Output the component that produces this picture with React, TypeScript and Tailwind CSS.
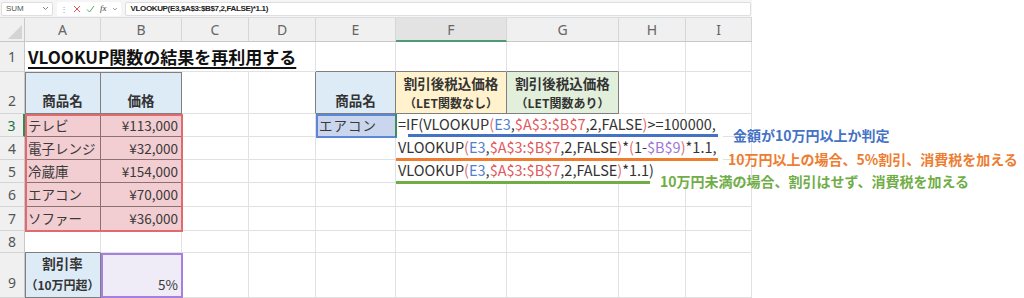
import React from 'react';

const GRIDCLS = 'border-r border-b border-[#e1e1e1]';

function C({ className = '', children }: { className?: string; children?: React.ReactNode }) {
  return <div className={`relative flex whitespace-nowrap ${GRIDCLS} ${className}`}>{children}</div>;
}

function RH({ n, active = false, className = '' }: { n: number; active?: boolean; className?: string }) {
  return (
    <div
      className={`flex justify-center border-b border-[#d4d4d4] bg-[#f0f0f0] font-['Noto_Sans',sans-serif] text-[14px] ${
        active ? 'border-r-2 border-r-[#2e8b57] text-[#217346]' : 'border-r border-r-[#c8c8c8] text-[#555]'
      } ${className}`}
    >
      {n}
    </div>
  );
}

function CH({ l, active = false }: { l: string; active?: boolean }) {
  return (
    <div
      className={`flex items-center justify-center border-r border-[#d6d6d6] font-['Noto_Sans',sans-serif] text-[14px] text-[#666] ${
        active ? 'border-b-2 border-b-[#4f9a74] bg-[#e3e3e3]' : 'border-b border-b-[#c8c8c8] bg-[#f0f0f0]'
      }`}
    >
      {l}
    </div>
  );
}

const R = ({ children }: { children: React.ReactNode }) => <span className="text-[#e0585b]">{children}</span>;
const B = ({ children }: { children: React.ReactNode }) => <span className="text-[#4f7fd0]">{children}</span>;
const P = ({ children }: { children: React.ReactNode }) => <span className="text-[#9d76d8]">{children}</span>;
const Q = ({ children }: { children: React.ReactNode }) => <span className="text-[#e06c72]">{children}</span>;

export default function App() {
  return (
    <div className="relative h-[298px] w-[1024px] overflow-hidden bg-white font-['Noto_Sans_CJK_JP','Noto_Sans',sans-serif] text-[#333]">
      {/* formula bar */}
      <div className="flex h-[18px] w-[752px] items-center gap-[4px] border-b border-[#d9dde3] bg-[#f5f5f5] px-[1px]">
        <div className="flex h-[14px] w-[52px] items-center justify-between rounded-[2px] border border-[#dedede] bg-white pl-[4px] pr-[3px] font-['Liberation_Sans',sans-serif] text-[8px] text-[#555]">
          <span>SUM</span>
          <svg width="7" height="5" viewBox="0 0 7 5">
            <path d="M1 1l2.5 2.5L6 1" fill="none" stroke="#777" strokeWidth="0.9" />
          </svg>
        </div>
        <div className="flex h-[14px] items-center gap-[5px] rounded-[2px] bg-white px-[3px]">
          <span className="text-[8px] leading-none text-[#999]">⋮</span>
          <svg width="8" height="8" viewBox="0 0 8 8">
            <path d="M1 1l6 6M7 1L1 7" stroke="#e05555" strokeWidth="1" />
          </svg>
          <svg width="9" height="8" viewBox="0 0 9 8">
            <path d="M1 4.5l2.5 2.5L8 1" fill="none" stroke="#4caf6a" strokeWidth="1" />
          </svg>
          <span className="font-['Liberation_Serif',serif] text-[9px] italic leading-none text-[#444]">fx</span>
          <svg width="6" height="4" viewBox="0 0 6 4">
            <path d="M1 1l2 2 2-2" fill="none" stroke="#888" strokeWidth="0.8" />
          </svg>
        </div>
        <div className="flex h-[14px] flex-1 items-center rounded-[2px] border border-[#dedede] bg-white pl-[5px] font-['Liberation_Sans',sans-serif] text-[8px] font-semibold tracking-[-0.35px] text-[#222]">
          VLOOKUP(E3,$A$3:$B$7,2,FALSE)*1.1)
        </div>
      </div>

      {/* grid */}
      <div className="grid w-[752px] grid-cols-[25px_76px_81px_67px_67px_80px_111px_112px_67px_66px] grid-rows-[24px_30px_42px_23px_23px_23px_24px_24px_22px_45px] text-[13.5px]">
        {/* header row */}
        <div className="relative border-r border-b border-[#c8c8c8] bg-[#f0f0f0]">
          <svg className="absolute bottom-[2px] right-[2px]" width="14" height="14" viewBox="0 0 14 14">
            <path d="M14 0V14H0Z" fill="#d4d4d4" />
          </svg>
        </div>
        <CH l="A" />
        <CH l="B" />
        <CH l="C" />
        <CH l="D" />
        <CH l="E" />
        <CH l="F" active />
        <CH l="G" />
        <CH l="H" />
        <CH l="I" />

        {/* row 1 */}
        <RH n={1} className="items-center" />
        <C className="col-span-4 items-center border-r-[#e1e1e1] pl-[3px]">
          <span className="whitespace-nowrap text-[17px] font-bold text-[#111] underline decoration-[1.5px] underline-offset-[3px]">
            VLOOKUP関数の結果を再利用する
          </span>
        </C>
        <C className="border-b-[#7f7f7f]" />
        <C className="border-b-[#7f7f7f]" />
        <C className="border-b-[#7f7f7f]" />
        <C />
        <C />

        {/* row 2 */}
        <RH n={2} className="items-end pb-[2px]" />
        <C className="items-end justify-center border-r-[#7f7f7f] border-b-[#7f7f7f] bg-[#ddebf7] pb-[3px] font-bold shadow-[inset_1px_1px_0_#7f7f7f]">
          商品名
        </C>
        <C className="items-end justify-center border-r-[#7f7f7f] border-b-[#7f7f7f] bg-[#ddebf7] pb-[3px] font-bold shadow-[inset_0_1px_0_#7f7f7f]">
          価格
        </C>
        <C />
        <C className="border-r-[#7f7f7f]" />
        <C className="items-end justify-center border-r-[#7f7f7f] border-b-[#7f7f7f] bg-[#ddebf7] pb-[3px] font-bold">
          商品名
        </C>
        <C className="flex-col items-center justify-center border-r-[#7f7f7f] border-b-[#7f7f7f] bg-[#fff2cc] font-bold leading-[20px]">
          <span>割引後税込価格</span>
          <span className="text-[12px]">（LET関数なし）</span>
        </C>
        <C className="flex-col items-center justify-center border-r-[#7f7f7f] border-b-[#7f7f7f] bg-[#e2efda] font-bold leading-[20px]">
          <span>割引後税込価格</span>
          <span className="text-[12px]">（LET関数あり）</span>
        </C>
        <C />
        <C />

        {/* rows 3-7 */}
        {[
          ['テレビ', '¥113,000'],
          ['電子レンジ', '¥32,000'],
          ['冷蔵庫', '¥154,000'],
          ['エアコン', '¥70,000'],
          ['ソファー', '¥36,000'],
        ].map(([name, price], i) => (
          <React.Fragment key={name}>
            <RH n={i + 3} active={i === 0} className="items-center" />
            <C className="items-center border-r-[#8a7272] border-b-[#8a7272] bg-[#f2cdd1] pl-[3px] text-[#3a3a3a]">
              {name}
            </C>
            <C className="items-center justify-end border-r-[#8a7272] border-b-[#8a7272] bg-[#f2cdd1] pr-[3px] text-[#3a3a3a]">
              {price}
            </C>
            <C />
            <C />
            {i === 0 ? (
              <C className="items-center bg-[#cad6ee] pl-[3px] tracking-[1px] text-[#3a3a3a]">エアコン</C>
            ) : (
              <C />
            )}
            <C />
            <C />
            <C />
            <C />
          </React.Fragment>
        ))}

        {/* row 8 */}
        <RH n={8} className="items-center" />
        <C className="border-b-[#7f7f7f]" />
        <C />
        <C />
        <C />
        <C />
        <C />
        <C />
        <C />
        <C />

        {/* row 9 */}
        <RH n={9} className="items-end pb-[4px]" />
        <C className="flex-col items-center justify-end border-r-[#7f7f7f] border-b-[#7f7f7f] bg-[#ddebf7] pb-[2px] font-bold leading-[21px] shadow-[inset_1px_0_0_#7f7f7f]">
          <span>割引率</span>
          <span className="text-[12px]">（10万円超）</span>
        </C>
        <C className="items-end justify-end bg-[#efebf7] pb-[3px] pr-[3px] text-[#3a3a3a]">5%</C>
        <C />
        <C />
        <C />
        <C />
        <C />
        <C />
        <C />
      </div>

      {/* reference highlights */}
      <div className="pointer-events-none absolute left-[25px] top-[114px] h-[118px] w-[158px] border-2 border-[#e06a6e]" />
      <div className="pointer-events-none absolute left-[316px] top-[114px] h-[24px] w-[81px] border-2 border-[#5b87d6]" />
      <div className="pointer-events-none absolute left-[101px] top-[253px] h-[45px] w-[82px] border-2 border-[#a680e0]" />

      {/* in-cell editor */}
      <div className="absolute left-[397px] top-[114px] h-[69px] w-[326px] bg-white pl-[1px] text-[14.5px] leading-[23px] text-[#333]">
        <div className="-mt-[2px]">
          <div className="whitespace-nowrap">
            =IF(VLOOKUP<Q>(</Q>
            <B>E3</B>,<R>$A$3:$B$7</R>,2,FALSE<Q>)</Q>&gt;=100000,
          </div>
          <div className="whitespace-nowrap">
            VLOOKUP<Q>(</Q>
            <B>E3</B>,<R>$A$3:$B$7</R>,2,FALSE<Q>)</Q>*<Q>(</Q>1-<P>$B$9</P>
            <Q>)</Q>*1.1,
          </div>
          <div className="whitespace-nowrap">
            VLOOKUP<Q>(</Q>
            <B>E3</B>,<R>$A$3:$B$7</R>,2,FALSE<Q>)</Q>*1.1)
          </div>
        </div>
      </div>
      <div className="absolute left-[395px] top-[114px] h-[23px] w-[2px] bg-[#3a8f5c]" />

      {/* underlines */}
      <div className="absolute left-[408px] top-[134px] h-[3px] w-[310px] bg-[#4472c4]" />
      <div className="absolute left-[396px] top-[158px] h-[3px] w-[322px] bg-[#ed7d31]" />
      <div className="absolute left-[396px] top-[181px] h-[3px] w-[254px] bg-[#70ad47]" />

      {/* annotations */}
      <div className="absolute left-[733px] top-[125px] whitespace-nowrap text-[14px] font-bold leading-[20px] text-[#4472c4]">
        金額が10万円以上か判定
      </div>
      <div className="absolute left-[728px] top-[149px] whitespace-nowrap text-[14px] font-bold leading-[20px] text-[#ed7d31]">
        10万円以上の場合、5%割引、消費税を加える
      </div>
      <div className="absolute left-[660px] top-[171px] whitespace-nowrap text-[14px] font-bold leading-[20px] text-[#70ad47]">
        10万円未満の場合、割引はせず、消費税を加える
      </div>
    </div>
  );
}
